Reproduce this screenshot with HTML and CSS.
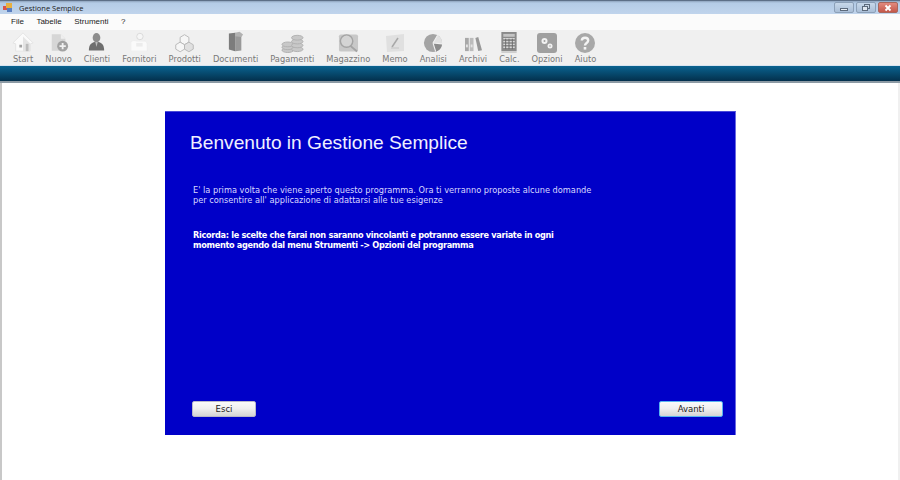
FILE: index.html
```html
<!DOCTYPE html>
<html lang="it">
<head>
    <meta charset="UTF-8">
    <title>Gestione Semplice</title>
    <link rel="stylesheet" href="styles.css">
</head>

<body>
<div class="window">
    <div class="titlebar">
        <svg class="app-icon" width="10" height="10" viewBox="0 0 10 10">
            <rect x="0" y="3" width="4" height="4" fill="#d9534a"/>
            <rect x="3" y="0" width="6" height="5" fill="#e8b040"/>
            <rect x="4" y="5" width="5" height="4" fill="#5a7fc0"/>
        </svg>
        <span class="title">Gestione Semplice</span>
        <div class="win-buttons">
            <div class="win-btn">
                <svg width="12" height="8" viewBox="0 0 12 8"><rect x="2.5" y="4.5" width="7" height="2" fill="#e8eef5" stroke="#5c6a7c" stroke-width="1"/></svg>
            </div>
            <div class="win-btn">
                <svg width="12" height="10" viewBox="0 0 12 10">
                    <rect x="4.5" y="1.5" width="5" height="4" fill="#c8d6e6" stroke="#5c6a7c"/>
                    <rect x="2.5" y="3.5" width="5" height="4" fill="#dfe7f0" stroke="#5c6a7c"/>
                </svg>
            </div>
            <div class="win-btn close">
                <svg width="10" height="8" viewBox="0 0 10 8"><path d="M2.5 1.5 L7.5 6.5 M7.5 1.5 L2.5 6.5" stroke="#fff" stroke-width="1.8"/></svg>
            </div>
        </div>
    </div>

    <div class="menubar">
        <span>File</span>
        <span>Tabelle</span>
        <span>Strumenti</span>
        <span>?</span>
    </div>

    <div class="toolbar">
        <div class="tool">
            <svg width="22" height="22" viewBox="0 0 24 22">
                <path d="M12 1 L23 12 L20 13 L20 21 L4 21 L4 13 L1 12 Z" fill="#fafafa" stroke="#e2e2e2"/>
                <path d="M12 5 L20 13 L20 21 L12 21 Z" fill="#e4e4e4"/>
                <rect x="8" y="14" width="3" height="3" fill="#a4a4a4"/>
                <rect x="15" y="13" width="3" height="8" fill="#bcbcbc"/>
            </svg>
            <span>Start</span>
        </div>
        <div class="tool">
            <svg width="20" height="21" viewBox="0 0 22 22">
                <path d="M3 2 L13 2 L18 7 L18 20 L3 20 Z" fill="#d6d6d6"/>
                <path d="M13 2 L13 7 L18 7 Z" fill="#efefef"/>
                <circle cx="15" cy="15" r="6" fill="#a2a2a2"/>
                <path d="M15 11.5 L15 18.5 M11.5 15 L18.5 15" stroke="#f2f2f2" stroke-width="2"/>
            </svg>
            <span>Nuovo</span>
        </div>
        <div class="tool">
            <svg width="17" height="22" viewBox="0 0 20 22">
                <ellipse cx="10" cy="6" rx="4.5" ry="5.5" fill="#8c8c8c"/>
                <path d="M1 21 C1 13 5 11 10 11 C15 11 19 13 19 21 Z" fill="#6e6e6e"/>
                <path d="M8.5 11 L11.5 11 L10 17 Z" fill="#bdbdbd"/>
            </svg>
            <span>Clienti</span>
        </div>
        <div class="tool">
            <svg width="22" height="22" viewBox="0 0 24 22">
                <circle cx="13" cy="5" r="3.5" fill="#f6f6f6" stroke="#d8d8d8"/>
                <path d="M3 21 L3 12 C3 9 7 9 9 10 L17 10 C21 10 21 13 21 15 L21 21 Z" fill="#fafafa" stroke="#ececec"/>
                <rect x="9" y="12" width="7" height="4" fill="#ececec"/>
            </svg>
            <span>Fornitori</span>
        </div>
        <div class="tool">
            <svg width="21" height="20" viewBox="0 0 24 22" fill="#f6f6f6" stroke="#b4b4b4">
                <path d="M12 1.5 L17 4.5 L17 10 L12 13 L7 10 L7 4.5 Z"/>
                <path d="M7 10 L12 13 L12 18 L7 21 L2 18 L2 13 Z"/>
                <path d="M17 10 L22 13 L22 18 L17 21 L12 18 L12 13 Z" fill="#e0e0e0"/>
            </svg>
            <span>Prodotti</span>
        </div>
        <div class="tool">
            <svg width="16" height="22" viewBox="0 0 18 23">
                <path d="M1 2 L8 1 L8 22 L1 20 Z" fill="#7c7c7c"/>
                <path d="M8 1 L15 3 L15 21 L8 22 Z" fill="#999"/>
                <path d="M8 1 L13 0 L17 3 L15 6 L8 5 Z" fill="#b2b2b2"/>
            </svg>
            <span>Documenti</span>
        </div>
        <div class="tool">
            <svg width="23" height="21" viewBox="0 0 24 22" fill="#c8c8c8" stroke="#b0b0b0">
                <ellipse cx="7" cy="19" rx="6" ry="2.5"/>
                <ellipse cx="7" cy="16" rx="6" ry="2.5"/>
                <ellipse cx="7" cy="13" rx="6" ry="2.5"/>
                <ellipse cx="17" cy="18" rx="6" ry="2.5"/>
                <ellipse cx="17" cy="14" rx="6" ry="2.5"/>
                <ellipse cx="17" cy="10" rx="6" ry="2.5"/>
                <ellipse cx="17" cy="6" rx="6" ry="2.5"/>
            </svg>
            <span>Pagamenti</span>
        </div>
        <div class="tool">
            <svg width="21" height="20" viewBox="0 0 22 20">
                <rect x="1" y="1" width="20" height="18" rx="2" fill="#c8c8c8"/>
                <circle cx="9" cy="8" r="6.5" fill="#d4d4d4" stroke="#a4a4a4" stroke-width="1.5"/>
                <path d="M13 13 L20 19" stroke="#a4a4a4" stroke-width="2"/>
            </svg>
            <span>Magazzino</span>
        </div>
        <div class="tool">
            <svg width="20" height="20" viewBox="0 0 20 20">
                <path d="M1 3 L19 1 L19 18 L2 19 Z" fill="#e0e0e0"/>
                <path d="M7 14 L13 5" stroke="#a8a8a8" stroke-width="1.5"/>
                <path d="M6 15 L14 15" stroke="#c4c4c4"/>
            </svg>
            <span>Memo</span>
        </div>
        <div class="tool">
            <svg width="20" height="20" viewBox="0 0 22 22">
                <circle cx="11" cy="11" r="10" fill="#a4a4a4"/>
                <path d="M11 11 L16 2.5 A10 10 0 0 1 21 12 Z" fill="#e2e2e2"/>
                <path d="M11 11 L21 12 A10 10 0 0 1 14 20.5 Z" fill="#8c8c8c"/>
                <path d="M11 11 L16 2.5 M11 11 L21 12 M11 11 L14 20.5" stroke="#f0f0f0" stroke-width="1.2"/>
            </svg>
            <span>Analisi</span>
        </div>
        <div class="tool">
            <svg width="17" height="17" viewBox="0 0 18 18">
                <rect x="0" y="2" width="4" height="14" fill="#a8a8a8"/>
                <rect x="5" y="2" width="4" height="14" fill="#bcbcbc"/>
                <path d="M11 2 L14 1 L18 15 L14 16 Z" fill="#989898"/>
                <rect x="1" y="9" width="2" height="3" fill="#e4e4e4"/>
                <rect x="6" y="9" width="2" height="3" fill="#e4e4e4"/>
            </svg>
            <span>Archivi</span>
        </div>
        <div class="tool">
            <svg width="16" height="21" viewBox="0 0 16 22">
                <rect x="0" y="0" width="16" height="20" fill="#8a8a8a"/>
                <rect x="2" y="2" width="12" height="3" fill="#c4c4c4"/>
                <path d="M2 7 H14 M2 10 H14 M2 13 H14 M2 16 H14" stroke="#d8d8d8" stroke-width="1.4"/>
                <path d="M4.5 7 V18 M8 7 V18 M11.5 7 V18" stroke="#6c6c6c"/>
                <rect x="0" y="20" width="16" height="2" fill="#cfcfcf"/>
            </svg>
            <span>Calc.</span>
        </div>
        <div class="tool">
            <svg width="20" height="20" viewBox="0 0 20 20">
                <rect x="0" y="0" width="20" height="20" rx="3" fill="#a0a0a0"/>
                <circle cx="7.5" cy="8" r="3" fill="#f2f2f2"/>
                <circle cx="13" cy="13" r="2.5" fill="#f2f2f2"/>
                <circle cx="7.5" cy="8" r="1" fill="#a0a0a0"/>
                <circle cx="13" cy="13" r="0.8" fill="#a0a0a0"/>
            </svg>
            <span>Opzioni</span>
        </div>
        <div class="tool">
            <svg width="20" height="20" viewBox="0 0 20 20">
                <circle cx="10" cy="10" r="10" fill="#a8a8a8"/>
                <path d="M6.8 7.5 C7 3.8 13.2 3.8 13.2 7.5 C13.2 10 10 10 10 12.5" fill="none" stroke="#f4f4f4" stroke-width="2.4"/>
                <rect x="8.7" y="14" width="2.6" height="2.6" fill="#f4f4f4"/>
            </svg>
            <span>Aiuto</span>
        </div>
    </div>

    <div class="band"></div>

    <div class="content">
        <div class="wizard">
            <h1>Benvenuto in Gestione Semplice</h1>
            <p class="intro">E' la prima volta che viene aperto questo programma. Ora ti verranno proposte alcune domande<br>per consentire all' applicazione di adattarsi alle tue esigenze</p>
            <p class="note">Ricorda: le scelte che farai non saranno vincolanti e potranno essere variate in ogni<br>momento agendo dal menu Strumenti -&gt; Opzioni del programma</p>
            <div class="wizard-buttons">
                <button>Esci</button>
                <button class="default">Avanti</button>
            </div>
        </div>
    </div>
</div>
</body>
</html>
```

FILE: styles.css
```css
* {
    margin: 0;
    padding: 0;
    box-sizing: border-box;
}

html, body {
    width: 900px;
    height: 480px;
    overflow: hidden;
}

body {
    font-family: "DejaVu Sans", sans-serif;
    background-color: #fff;
    color: #333;
}

.window {
    display: flex;
    flex-direction: column;
    height: 480px;
}

.titlebar {
    display: flex;
    align-items: center;
    height: 14px;
    padding-left: 3px;
    background: linear-gradient(#8ea3bd 0, #b4cbe6 2px, #c0d4ec 100%);
    border-top: 1px solid #5d6f87;
}

.app-icon {
    margin-right: 6px;
}

.title {
    font-family: "Open Sans", sans-serif;
    font-size: 7.5px;
    color: #1c1c1c;
}

.win-buttons {
    display: flex;
    gap: 2px;
    margin-left: auto;
    margin-right: 2px;
    align-self: flex-start;
}

.win-btn {
    display: flex;
    align-items: center;
    justify-content: center;
    width: 20px;
    height: 11px;
    margin-top: 1px;
    border: 1px solid #8ca0b8;
    border-radius: 2px;
    background: linear-gradient(#c8d8ea, #a9bed7);
}

.win-btn.close {
    border-color: #a8665c;
    background: linear-gradient(#e28a7e, #c4574a);
}

.menubar {
    display: flex;
    gap: 12.5px;
    height: 16px;
    padding: 2px 0 0 11px;
    background-color: #fbfbfb;
    font-family: "Liberation Sans", sans-serif;
    font-size: 8px;
    line-height: 11px;
    color: #1c1c1c;
}

.toolbar {
    display: flex;
    gap: 12px;
    height: 36px;
    padding: 1px 0 0 13px;
    background-color: #f0f0f0;
    border-bottom: 1px solid #d8e4f0;
}

.tool {
    display: flex;
    flex-direction: column;
    align-items: center;
    justify-content: flex-end;
    height: 34px;
    font-size: 8.3px;
    line-height: 11px;
    color: #787878;
}

/* icons must not widen the column, the label sets it */
.tool svg {
    margin: 0 -6px 1px;
    filter: blur(0.4px);
}

.band {
    height: 17px;
    background: linear-gradient(#0a6390, #03304c);
    border-bottom: 2px solid #8c9aa4;
}

.content {
    flex: 1;
    padding: 28px 0 0 163px;
    background-color: #fff;
    border-left: 2px solid #c8c8c8;
    border-right: 2px solid #f0f0f0;
}

.wizard {
    display: flex;
    flex-direction: column;
    width: 571px;
    height: 324px;
    padding: 0 12px 18px 25px;
    background-color: #0000c8;
    border-top: 1px solid #4a4ad8;
    border-right: 1px solid #6a6ae0;
    color: #fff;
}

h1 {
    margin-top: 20px;
    font-family: "Liberation Sans", sans-serif;
    font-size: 19.15px;
    font-weight: normal;
    line-height: 22px;
    color: #f0f0ff;
}

.intro,
.note {
    margin-left: 3px;
    line-height: 9.5px;
}

.intro {
    margin-top: 32px;
    font-size: 8.23px;
    color: #d8d8ff;
}

.note {
    margin-top: 26px;
    font-size: 8.2px;
    font-weight: bold;
    letter-spacing: -0.33px;
}

.wizard-buttons {
    display: flex;
    justify-content: space-between;
    margin-top: auto;
    padding-left: 2px;
}

button {
    width: 64px;
    height: 16px;
    font-family: "DejaVu Sans", sans-serif;
    font-size: 8.5px;
    color: #222;
    border: 1px solid #b8b8c8;
    border-radius: 2px;
    background: linear-gradient(#fafafa, #f0f0f0 45%, #d4d4d4);
}

button.default {
    border-color: #58b4f0;
}
```
